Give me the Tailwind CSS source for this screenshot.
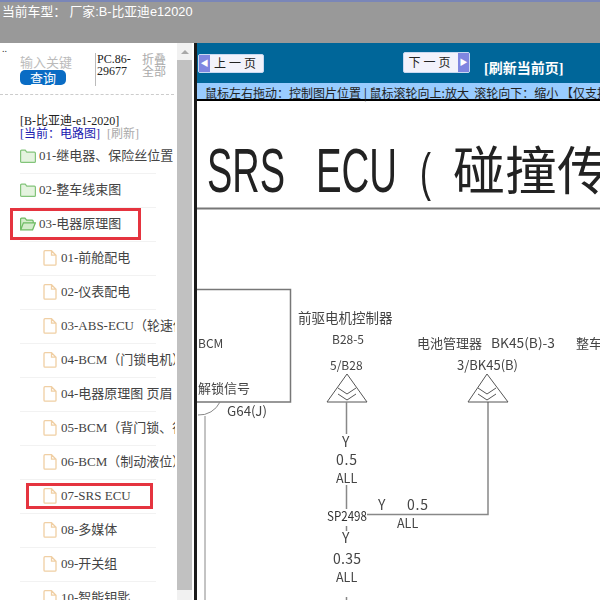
<!DOCTYPE html>
<html lang="zh-CN">
<head>
    <meta charset="UTF-8">
    <title>电路图</title>
    <script src="https://cdn.jsdelivr.net/npm/@tailwindcss/browser@4"></script>
</head>
<body class="w-[600px] h-[600px] overflow-hidden bg-white font-['Liberation_Serif','Noto_Sans_CJK_SC',serif]">
    <!-- Top bar -->
    <div class="h-[43px] bg-[#999999] border-t-2 border-[#7a86b8] pl-[2px] text-white text-[12.8px] leading-[20px] font-['Liberation_Sans','Noto_Sans_CJK_SC',sans-serif] whitespace-nowrap">
        当前车型： 厂家:B-比亚迪e12020
    </div>

    <div class="flex h-[557px]">
        <!-- Sidebar -->
        <div class="relative w-[177px] shrink-0 overflow-hidden">
            <div class="absolute left-[2px] top-[1px] text-[10px] leading-[10px] text-[#333]">..</div>
            <div class="flex pl-[20px] pt-[10px] h-[52px] border-b border-dashed border-[#cccccc] mr-[3px]">
                <div class="w-[75px]">
                    <div class="text-[13px] leading-[17px] text-[#bbbbbb] font-['Noto_Sans_CJK_SC',sans-serif] whitespace-nowrap">输入关键</div>
                    <div class="w-[46px] h-[15px] rounded-[5px] bg-[#0a6cc4] text-white text-[13px] leading-[15px] text-center font-['Noto_Sans_CJK_SC',sans-serif]">查询</div>
                </div>
                <div class="w-[47px] h-[33px] border-l border-[#bbbbbb] pl-px text-[12px] leading-[12px] text-[#222]">PC.86-<br>29677</div>
                <div class="text-[12px] leading-[12px] text-[#aaaaaa] font-['Noto_Sans_CJK_SC',sans-serif]">折叠<br>全部</div>
            </div>
            <div class="pl-[20px] pt-[20px] text-[12px] leading-[13px] whitespace-nowrap">
                <div class="text-[#222]">[B-比亚迪-e1-2020]</div>
                <div class="text-[#1a1ab0]">[当前：电路图] <span class="text-[#aaaaaa] ml-[4px]">[刷新]</span></div>
            </div>

            <!-- Tree -->
            <div class="-mt-px w-[175px] overflow-hidden">
                <div class="flex items-center h-[34px] pb-[2px] ml-[20px] w-[136px] border-b border-[#f2f2f2] text-[13px] text-[#444] whitespace-nowrap">
                    <svg class="shrink-0 mr-[3px]" width="16" height="14" viewBox="0 0 16 14" fill="#e4f3df" stroke="#82c47a" stroke-width="1.2"><path d="M.6 12.4V2.2q0-1 1-1h3.6l1.6 2h7.6q1 0 1 1v8.2q0 1-1 1H1.6q-1 0-1-1z"/></svg>
                    01-继电器、保险丝位置
                </div>
                <div class="flex items-center h-[34px] pb-[2px] ml-[20px] w-[136px] border-b border-[#f2f2f2] text-[13px] text-[#444] whitespace-nowrap">
                    <svg class="shrink-0 mr-[3px]" width="16" height="14" viewBox="0 0 16 14" fill="#e4f3df" stroke="#82c47a" stroke-width="1.2"><path d="M.6 12.4V2.2q0-1 1-1h3.6l1.6 2h7.6q1 0 1 1v8.2q0 1-1 1H1.6q-1 0-1-1z"/></svg>
                    02-整车线束图
                </div>
                <div class="flex items-center h-[34px] pb-[2px] ml-[20px] w-[136px] border-b border-[#f2f2f2] text-[13px] text-[#444] whitespace-nowrap">
                    <svg class="shrink-0 mr-[3px]" width="16" height="14" viewBox="0 0 16 14" fill="#d3ecca" stroke="#6dba62" stroke-width="1.2"><path d="M.6 12.6V2.2q0-1 1-1h3.4l1.6 2h5.6q1 0 1 1v1.6M.8 12.8l2.6-7h12l-2.8 7z"/></svg>
                    03-电器原理图
                </div>
                <div class="flex items-center h-[34px] pb-[2px] ml-[20px] pl-[23px] w-[136px] border-b border-[#f2f2f2] text-[13px] text-[#444] whitespace-nowrap">
                    <svg class="shrink-0 mr-[4px]" width="14" height="16" viewBox="0 0 14 16" fill="#fff" stroke="#f0cfa4" stroke-width="1.3"><path d="M1 1.7q0-1 1-1h6.5l4.5 4.5v9q0 1-1 1H2q-1 0-1-1zM8.5.7v4.5H13"/></svg>
                    01-前舱配电
                </div>
                <div class="flex items-center h-[34px] pb-[2px] ml-[20px] pl-[23px] w-[136px] border-b border-[#f2f2f2] text-[13px] text-[#444] whitespace-nowrap">
                    <svg class="shrink-0 mr-[4px]" width="14" height="16" viewBox="0 0 14 16" fill="#fff" stroke="#f0cfa4" stroke-width="1.3"><path d="M1 1.7q0-1 1-1h6.5l4.5 4.5v9q0 1-1 1H2q-1 0-1-1zM8.5.7v4.5H13"/></svg>
                    02-仪表配电
                </div>
                <div class="flex items-center h-[34px] pb-[2px] ml-[20px] pl-[23px] w-[136px] border-b border-[#f2f2f2] text-[13px] text-[#444] whitespace-nowrap">
                    <svg class="shrink-0 mr-[4px]" width="14" height="16" viewBox="0 0 14 16" fill="#fff" stroke="#f0cfa4" stroke-width="1.3"><path d="M1 1.7q0-1 1-1h6.5l4.5 4.5v9q0 1-1 1H2q-1 0-1-1zM8.5.7v4.5H13"/></svg>
                    03-ABS-ECU（轮速传感器）
                </div>
                <div class="flex items-center h-[34px] pb-[2px] ml-[20px] pl-[23px] w-[136px] border-b border-[#f2f2f2] text-[13px] text-[#444] whitespace-nowrap">
                    <svg class="shrink-0 mr-[4px]" width="14" height="16" viewBox="0 0 14 16" fill="#fff" stroke="#f0cfa4" stroke-width="1.3"><path d="M1 1.7q0-1 1-1h6.5l4.5 4.5v9q0 1-1 1H2q-1 0-1-1zM8.5.7v4.5H13"/></svg>
                    04-BCM（门锁电机）
                </div>
                <div class="flex items-center h-[34px] pb-[2px] ml-[20px] pl-[23px] w-[136px] border-b border-[#f2f2f2] text-[13px] text-[#444] whitespace-nowrap">
                    <svg class="shrink-0 mr-[4px]" width="14" height="16" viewBox="0 0 14 16" fill="#fff" stroke="#f0cfa4" stroke-width="1.3"><path d="M1 1.7q0-1 1-1h6.5l4.5 4.5v9q0 1-1 1H2q-1 0-1-1zM8.5.7v4.5H13"/></svg>
                    04-电器原理图 页眉
                </div>
                <div class="flex items-center h-[34px] pb-[2px] ml-[20px] pl-[23px] w-[136px] border-b border-[#f2f2f2] text-[13px] text-[#444] whitespace-nowrap">
                    <svg class="shrink-0 mr-[4px]" width="14" height="16" viewBox="0 0 14 16" fill="#fff" stroke="#f0cfa4" stroke-width="1.3"><path d="M1 1.7q0-1 1-1h6.5l4.5 4.5v9q0 1-1 1H2q-1 0-1-1zM8.5.7v4.5H13"/></svg>
                    05-BCM（背门锁、行李）
                </div>
                <div class="flex items-center h-[34px] pb-[2px] ml-[20px] pl-[23px] w-[136px] border-b border-[#f2f2f2] text-[13px] text-[#444] whitespace-nowrap">
                    <svg class="shrink-0 mr-[4px]" width="14" height="16" viewBox="0 0 14 16" fill="#fff" stroke="#f0cfa4" stroke-width="1.3"><path d="M1 1.7q0-1 1-1h6.5l4.5 4.5v9q0 1-1 1H2q-1 0-1-1zM8.5.7v4.5H13"/></svg>
                    06-BCM（制动液位）
                </div>
                <div class="flex items-center h-[34px] pb-[2px] ml-[20px] pl-[23px] w-[136px] border-b border-[#f2f2f2] text-[13px] text-[#444] whitespace-nowrap">
                    <svg class="shrink-0 mr-[4px]" width="14" height="16" viewBox="0 0 14 16" fill="#fff" stroke="#f0cfa4" stroke-width="1.3"><path d="M1 1.7q0-1 1-1h6.5l4.5 4.5v9q0 1-1 1H2q-1 0-1-1zM8.5.7v4.5H13"/></svg>
                    07-SRS ECU
                </div>
                <div class="flex items-center h-[34px] pb-[2px] ml-[20px] pl-[23px] w-[136px] border-b border-[#f2f2f2] text-[13px] text-[#444] whitespace-nowrap">
                    <svg class="shrink-0 mr-[4px]" width="14" height="16" viewBox="0 0 14 16" fill="#fff" stroke="#f0cfa4" stroke-width="1.3"><path d="M1 1.7q0-1 1-1h6.5l4.5 4.5v9q0 1-1 1H2q-1 0-1-1zM8.5.7v4.5H13"/></svg>
                    08-多媒体
                </div>
                <div class="flex items-center h-[34px] pb-[2px] ml-[20px] pl-[23px] w-[136px] border-b border-[#f2f2f2] text-[13px] text-[#444] whitespace-nowrap">
                    <svg class="shrink-0 mr-[4px]" width="14" height="16" viewBox="0 0 14 16" fill="#fff" stroke="#f0cfa4" stroke-width="1.3"><path d="M1 1.7q0-1 1-1h6.5l4.5 4.5v9q0 1-1 1H2q-1 0-1-1zM8.5.7v4.5H13"/></svg>
                    09-开关组
                </div>
                <div class="flex items-center h-[34px] pb-[2px] ml-[20px] pl-[23px] w-[136px] text-[13px] text-[#444] whitespace-nowrap">
                    <svg class="shrink-0 mr-[4px]" width="14" height="16" viewBox="0 0 14 16" fill="#fff" stroke="#f0cfa4" stroke-width="1.3"><path d="M1 1.7q0-1 1-1h6.5l4.5 4.5v9q0 1-1 1H2q-1 0-1-1zM8.5.7v4.5H13"/></svg>
                    10-智能钥匙
                </div>
            </div>

            <!-- Red annotation boxes -->
            <div class="absolute left-[10px] top-[165px] w-[131px] h-[32px] border-[3px] border-[#e5343f]"></div>
            <div class="absolute left-[26px] top-[440px] w-[127px] h-[26px] border-[3px] border-[#e5343f]"></div>
        </div>

        <!-- Scrollbar -->
        <div class="w-[15px] shrink-0 flex flex-col bg-[#f1f1f1]">
            <div class="h-[17px] flex items-center justify-center">
                <div class="w-0 h-0 border-x-[4px] border-x-transparent border-b-[4px] border-b-[#a8a8a8]"></div>
            </div>
            <div class="h-[530px] bg-[#c1c1c1]"></div>
        </div>

        <!-- Drawing panel -->
        <div class="flex-1 min-w-0 ml-[2px] border-l-[3px] border-[#1a1a1a] overflow-hidden">
            <div class="flex h-[40px] bg-[#006699] whitespace-nowrap">
                <div class="flex items-center w-[66px] h-[19px] ml-[1px] mt-[11px] rounded-[2px] border border-[#c8d8f0] bg-[#f2f2fb] text-[12px] text-[#222]">
                    <div class="w-[11px] h-full bg-[#7f86e0] text-white text-[8px] leading-[17px] text-center">◀</div>
                    <div class="flex-1 text-center tracking-[3px]">上一页</div>
                </div>
                <div class="flex items-center w-[67px] h-[21px] ml-[139px] mt-[9px] rounded-[2px] border border-[#c8d8f0] bg-[#f2f2fb] text-[12px] text-[#222]">
                    <div class="flex-1 text-center tracking-[3px]">下一页</div>
                    <div class="w-[11px] h-full bg-[#7f86e0] text-white text-[8px] leading-[19px] text-center">▶</div>
                </div>
                <div class="ml-[14px] mt-[17px] text-[14px] leading-[18px] font-bold text-white">[刷新当前页]</div>
            </div>
            <div class="h-[18px] bg-[#99ccff] border-b-2 border-black pl-[8px] pt-px text-[12px] leading-[18px] text-[#222] whitespace-nowrap font-['Noto_Sans_CJK_SC',sans-serif]">鼠标左右拖动：控制图片位置 | 鼠标滚轮向上:放大&nbsp; 滚轮向下：缩小 【仅支持</div>

            <!-- Wiring diagram -->
            <svg class="block blur-[0.35px]" width="403" height="499" viewBox="197 101 403 499" font-family="'Noto Sans CJK SC',sans-serif" fill="#444">
                <g fill="#222">
                    <text x="207" y="192" font-size="63" font-family="'Liberation Sans',sans-serif" textLength="78" lengthAdjust="spacingAndGlyphs">SRS</text>
                    <text x="316" y="192" font-size="63" font-family="'Liberation Sans',sans-serif" textLength="81" lengthAdjust="spacingAndGlyphs">ECU</text>
                    <text x="420" y="190" font-size="52" font-family="'Liberation Sans',sans-serif" textLength="11" lengthAdjust="spacingAndGlyphs">(</text>
                    <text x="453" y="190" font-size="52">碰撞传</text>
                </g>
                <path d="M197 208.500H600" stroke="#777" stroke-width="2"/>
                <path d="M197 289.500H290.500V402H197" fill="none" stroke="#777" stroke-width="1.500"/>
                <path d="M198 415a23 23 0 0 0 22-13M205 416V600" fill="none" stroke="#888" stroke-width="1"/>
                <text x="198" y="348" font-size="12">BCM</text>
                <text x="198" y="393" font-size="13">解锁信号</text>
                <text x="227" y="416" font-size="13" textLength="40" lengthAdjust="spacingAndGlyphs">G64(J)</text>

                <text x="298" y="323" font-size="13.500">前驱电机控制器</text>
                <text x="332" y="344" font-size="12">B28-5</text>
                <text x="330" y="370" font-size="12">5/B28</text>
                <path d="M347 374L327 402H367ZM338 388L347 394L356 388M338 394L347 400L356 394" fill="none" stroke="#555" stroke-width="1"/>
                <path d="M346.500 402V434M346.500 485V509M346.500 526V531M346.500 597V600" stroke="#888" stroke-width="1.500"/>
                <text x="342" y="447" font-size="14">Y</text>
                <text x="336" y="465" font-size="14" textLength="21">0.5</text>
                <text x="336" y="483" font-size="12.500">ALL</text>
                <text x="327" y="521" font-size="13" fill="#333" textLength="40" lengthAdjust="spacingAndGlyphs">SP2498</text>
                <path d="M367 514.500H488V402" fill="none" stroke="#888" stroke-width="1.500"/>
                <text x="378" y="510" font-size="14">Y</text>
                <text x="407" y="510" font-size="14" textLength="21">0.5</text>
                <text x="397" y="528" font-size="12.500">ALL</text>
                <text x="342" y="543" font-size="14">Y</text>
                <text x="333" y="564" font-size="14" textLength="28">0.35</text>
                <text x="336" y="582" font-size="12.500">ALL</text>

                <text x="417" y="348" font-size="13">电池管理器</text>
                <text x="491" y="348" font-size="13" textLength="64" lengthAdjust="spacingAndGlyphs">BK45(B)-3</text>
                <text x="576" y="348" font-size="13">整车</text>
                <text x="457" y="370" font-size="13" textLength="61" lengthAdjust="spacingAndGlyphs">3/BK45(B)</text>
                <path d="M487 374L468 402H508ZM478 388L487 394L496 388M478 394L487 400L496 394" fill="none" stroke="#555" stroke-width="1"/>
            </svg>
        </div>
    </div>
</body>
</html>
